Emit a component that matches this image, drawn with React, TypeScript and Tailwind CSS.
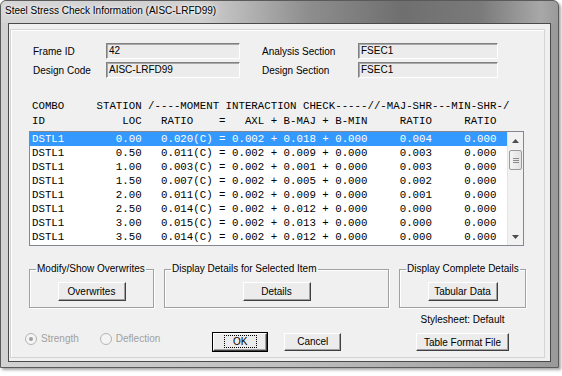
const put = (cols: [number, string][]) => {
  let s = '';
  for (const [c, t] of cols) s = s.padEnd(c, ' ') + t;
  return s;
};

const rows = [
  ['0.00', '0.020', '0.002', '0.018', '0.000', '0.004', '0.000'],
  ['0.50', '0.011', '0.002', '0.009', '0.000', '0.003', '0.000'],
  ['1.00', '0.003', '0.002', '0.001', '0.000', '0.003', '0.000'],
  ['1.50', '0.007', '0.002', '0.005', '0.000', '0.002', '0.000'],
  ['2.00', '0.011', '0.002', '0.009', '0.000', '0.001', '0.000'],
  ['2.50', '0.014', '0.002', '0.012', '0.000', '0.000', '0.000'],
  ['3.00', '0.015', '0.002', '0.013', '0.000', '0.000', '0.000'],
  ['3.50', '0.014', '0.002', '0.012', '0.000', '0.000', '0.000'],
];

const head1 = 'COMBO     STATION /----MOMENT INTERACTION CHECK-----//-MAJ-SHR---MIN-SHR-/';
const head2 = put([[0, 'ID'], [14, 'LOC'], [20, 'RATIO'], [29, '='], [33, 'AXL'], [37, '+'], [39, 'B-MAJ'], [45, '+'], [47, 'B-MIN'], [57, 'RATIO'], [67, 'RATIO']]);

const rowText = (r: string[]) =>
  put([[0, 'DSTL1'], [13, r[0]], [20, r[1] + '(C)'], [29, '='], [31, r[2]], [37, '+'], [39, r[3]], [45, '+'], [47, r[4]], [57, r[5]], [67, r[6]]]);

function Button({ className, children }: { className: string; children: React.ReactNode }) {
  return (
    <div
      className={
        'flex items-center justify-center bg-[#ececec] border border-t-white border-l-white border-r-[#404040] border-b-[#404040] shadow-[inset_-1px_-1px_0_#a0a0a0] ' +
        className
      }
    >
      {children}
    </div>
  );
}

function Field({ label, value, labelW, boxW }: { label: string; value: string; labelW: string; boxW: string }) {
  return (
    <div className="flex h-[16px]">
      <div className={labelW + ' pt-[3px] leading-[12px]'}>{label}</div>
      <div className={boxW + ' h-[16px] bg-[#ececec] border border-t-[#808080] border-l-[#808080] border-r-white border-b-white shadow-[inset_1px_1px_0_#a8a8a8] pl-[2px] leading-[14px]'}>
        {value}
      </div>
    </div>
  );
}

function Group({ title, className, children }: { title: string; className: string; children: React.ReactNode }) {
  return (
    <fieldset className={'h-[45px] border border-[#a0a0a0] shadow-[1px_1px_0_#fff,inset_1px_1px_0_#fff] ' + className}>
      <legend className="ml-[6px] px-[1px] leading-[12px]">{title}</legend>
      <div className="flex justify-center pt-[7px]">{children}</div>
    </fieldset>
  );
}

function Radio({ checked, label, className }: { checked: boolean; label: string; className: string }) {
  return (
    <div className={'flex items-center mb-[5px] text-[#a0a0a0] ' + className}>
      <div className="w-[12px] h-[12px] rounded-full border border-[#b4b4b4] bg-[#f4f4f4] flex items-center justify-center">
        {checked && <div className="w-[4px] h-[4px] rounded-full bg-[#a0a0a0]" />}
      </div>
      <span className="ml-[4px] leading-[12px]">{label}</span>
    </div>
  );
}

export default function App() {
  return (
    <div className="w-[562px] h-[376px] bg-white overflow-hidden font-['Liberation_Sans',Arial,sans-serif] text-[10px] text-black">
      <div className="w-[559px] h-[368px] border border-[#5a5a5a] rounded-t-[6px] bg-[linear-gradient(90deg,#d2d2d2,#c0c0c0_50%,#a6a6a6_85%,#9a9a9a)] shadow-[2px_2px_3px_rgba(0,0,0,0.35)] flex flex-col">
        <div className="h-[22px] pl-[4px] pb-[3px] flex items-center rounded-t-[6px] bg-[linear-gradient(90deg,#d6d6d6,#cfcfcf_36%,#8e8e8e_55%,#6f6f6f_72%,#7a7a7a_86%,#a8a8a8_97%,#9a9a9a)]">
          <span className="[text-shadow:0_0_6px_#fff,0_0_3px_#fff]">Steel Stress Check Information (AISC-LRFD99)</span>
        </div>
        <div className="ml-[7px] w-[543px] h-[339px] border border-[#4a4a4a] bg-[#f0f0f0] flex flex-col">
          <div className="ml-px mt-[5px] mr-[5px] mb-[3px] flex-1 border border-[#d4d4d4] shadow-[inset_1px_1px_0_#fff] pl-[18px]">
            {/* header fields */}
            <div className="mt-[13px] ml-[4px] flex gap-[22px]">
              <div className="flex flex-col gap-[3px]">
                <Field label="Frame ID" value="42" labelW="w-[73px]" boxW="w-[134px]" />
                <Field label="Design Code" value="AISC-LRFD99" labelW="w-[73px]" boxW="w-[134px]" />
              </div>
              <div className="flex flex-col gap-[3px]">
                <Field label="Analysis Section" value="FSEC1" labelW="w-[96px]" boxW="w-[140px]" />
                <Field label="Design Section" value="FSEC1" labelW="w-[96px]" boxW="w-[140px]" />
              </div>
            </div>

            {/* table */}
            <div className="font-['Liberation_Mono','Courier_New',monospace] text-[10.75px] whitespace-pre">
              <div className="mt-[21px] ml-[3px] leading-[15px]">
                <div>{head1}</div>
                <div>{head2}</div>
              </div>
              <div className="mt-[2px] w-[495px] h-[115px] border border-[#828790] bg-white flex">
                <div className="flex-1 flex flex-col">
                  {rows.map((r, i) => (
                    <div
                      key={i}
                      className={
                        i === 0
                          ? 'h-[14px] leading-[14px] pl-[2px] bg-[#3399ff] text-white'
                          : 'h-[14px] leading-[14px] pl-[2px]'
                      }
                    >
                      {rowText(r)}
                    </div>
                  ))}
                </div>
                <div className="w-[16px] flex flex-col bg-[#f2f2f2] border-l border-[#e4e4e4]">
                  <div className="h-[17px] flex items-center justify-center">
                    <svg width="7" height="4" viewBox="0 0 7 4"><path d="M0 4 L3.5 0 L7 4 Z" fill="#4d4d4d" /></svg>
                  </div>
                  <div className="flex-1">
                    <div className="mt-px mx-px h-[20px] rounded-[2px] border border-[#9a9a9a] bg-[linear-gradient(90deg,#f4f4f4,#e2e2e2)] flex flex-col items-center justify-center gap-[1px]">
                      <div className="w-[6px] h-px bg-[#8a8a8a]" />
                      <div className="w-[6px] h-px bg-[#8a8a8a]" />
                      <div className="w-[6px] h-px bg-[#8a8a8a]" />
                    </div>
                  </div>
                  <div className="h-[17px] flex items-center justify-center">
                    <svg width="7" height="4" viewBox="0 0 7 4"><path d="M0 0 L3.5 4 L7 0 Z" fill="#4d4d4d" /></svg>
                  </div>
                </div>
              </div>
            </div>

            {/* groups */}
            <div className="mt-[17px] flex gap-[10px]">
              <Group title="Modify/Show Overwrites" className="w-[125px]">
                <Button className="w-[68px] h-[19px]">Overwrites</Button>
              </Group>
              <Group title="Display Details for Selected Item" className="w-[225px]">
                <Button className="w-[68px] h-[19px]">Details</Button>
              </Group>
              <Group title="Display Complete Details" className="w-[127px]">
                <Button className="w-[70px] h-[19px]">Tabular Data</Button>
              </Group>
            </div>

            {/* bottom */}
            <div className="flex items-end w-[497px]">
              <div className="flex items-center h-[19px]">
                <Radio checked label="Strength" className="-ml-[4px]" />
                <Radio checked={false} label="Deflection" className="ml-[21px]" />
                <div className="ml-[52px] w-[56px] h-[20px] border border-black">
                  <Button className="w-full h-full">
                    <span className="px-[8px] border border-dotted border-black leading-[11px]">OK</span>
                  </Button>
                </div>
                <Button className="ml-[16px] w-[57px] h-[18px]">Cancel</Button>
              </div>
              <div className="ml-auto w-[127px] flex flex-col items-center">
                <div className="mt-[6px] leading-[12px]">Stylesheet: Default</div>
                <Button className="mt-[7px] w-[93px] h-[18px]">Table Format File</Button>
              </div>
            </div>
          </div>
        </div>
      </div>
    </div>
  );
}
